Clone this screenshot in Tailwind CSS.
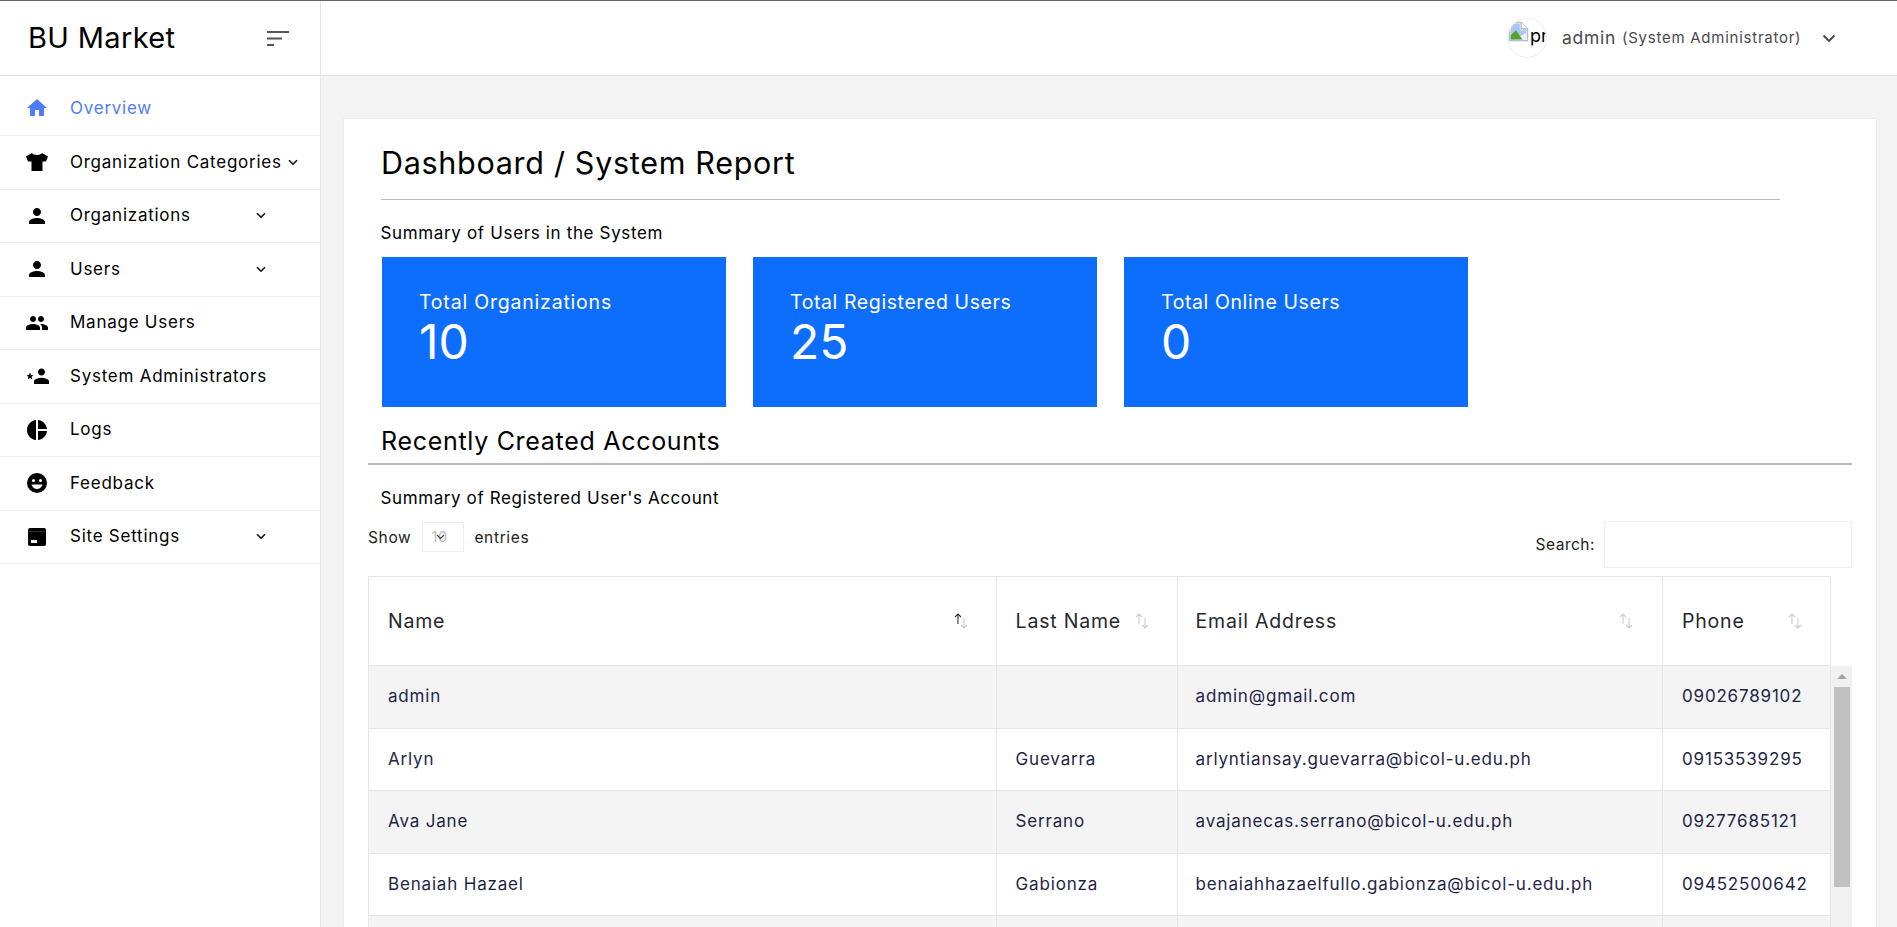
<!DOCTYPE html>
<html>
<head>
<meta charset="utf-8">
<script src="https://cdn.jsdelivr.net/npm/@tailwindcss/browser@4"></script>
</head>
<body class="m-0">
<div class="flex h-[927px] w-[1897px] overflow-hidden border-t border-[#666] bg-[#f3f3f3] font-['Inter','Liberation_Sans',sans-serif] text-black">
  <aside class="w-[321px] shrink-0 bg-white border-r border-[#e6e6e6]">
    <div class="h-[75px] border-b border-[#e3e3e3] flex items-center justify-between pl-[28px] pr-[31px]">
      <span class="text-[29px] leading-[40px] tracking-[0.35px]">BU Market</span>
      <svg width="22" height="15" viewBox="0 0 22 15" class="mt-px"><path d="M0 1h22M0 7.500h15M0 14h7" stroke="#555" stroke-width="2" fill="none"/></svg>
    </div>
    <nav class="text-[17px] tracking-[0.75px]">
      <a class="flex items-center h-[60px] pt-[7px] pl-[25px] gap-[21px] border-b border-[#efefef] text-[#4f7cff]">
        <svg width="24" height="24" viewBox="0 0 24 24" fill="currentColor" class="-mt-[2px]"><path d="M10 20v-6h4v6h5v-8h3L12 3 2 12h3v8z"/></svg><span>Overview</span>
      </a>
      <a class="flex items-center h-[53.500px] pl-[25px] gap-[21px] border-b border-[#efefef]">
        <svg width="24" height="24" viewBox="0 0 24 24" fill="#000"><path d="M7 3 1 6.500 3 11.500H6.500V21H17.500V11.500H21L23 6.500 17 3C16 5.500 8 5.500 7 3Z"/></svg><span>Organization Categories</span>
        <svg width="10" height="7" viewBox="0 0 10 7" class="absolute left-[288px] mt-px"><path d="M1 1.200 5 5.200 9 1.200" stroke="#111" stroke-width="1.600" fill="none"/></svg>
      </a>
      <a class="flex items-center h-[53.500px] pl-[25px] gap-[21px] border-b border-[#efefef]">
        <svg width="24" height="24" viewBox="0 0 24 24" fill="#000"><path d="M12 12c2.210 0 4-1.790 4-4s-1.790-4-4-4-4 1.790-4 4 1.790 4 4 4zm0 2c-2.670 0-8 1.340-8 4v2h16v-2c0-2.660-5.330-4-8-4z"/></svg><span class="w-[166px]">Organizations</span>
        <svg width="10" height="7" viewBox="0 0 10 7" class="-ml-[1px]"><path d="M1 1.200 5 5.200 9 1.200" stroke="#111" stroke-width="1.600" fill="none"/></svg>
      </a>
      <a class="flex items-center h-[53.500px] pl-[25px] gap-[21px] border-b border-[#efefef]">
        <svg width="24" height="24" viewBox="0 0 24 24" fill="#000"><path d="M12 12c2.210 0 4-1.790 4-4s-1.790-4-4-4-4 1.790-4 4 1.790 4 4 4zm0 2c-2.670 0-8 1.340-8 4v2h16v-2c0-2.660-5.330-4-8-4z"/></svg><span class="w-[166px]">Users</span>
        <svg width="10" height="7" viewBox="0 0 10 7" class="-ml-[1px]"><path d="M1 1.200 5 5.200 9 1.200" stroke="#111" stroke-width="1.600" fill="none"/></svg>
      </a>
      <a class="flex items-center h-[53.500px] pl-[25px] gap-[21px] border-b border-[#efefef]">
        <svg width="24" height="24" viewBox="0 0 24 24" fill="#000"><path d="M16 11c1.660 0 2.990-1.340 2.990-3S17.660 5 16 5c-1.660 0-3 1.340-3 3s1.340 3 3 3zm-8 0c1.660 0 2.990-1.340 2.990-3S9.660 5 8 5C6.340 5 5 6.340 5 8s1.340 3 3 3zm0 2c-2.330 0-7 1.170-7 3.500V19h14v-2.500c0-2.330-4.670-3.500-7-3.500zm8 0c-.29 0-.62.02-.97.05 1.160.84 1.970 1.970 1.970 3.450V19h6v-2.500c0-2.330-4.670-3.500-7-3.500z"/></svg><span>Manage Users</span>
      </a>
      <a class="flex items-center h-[53.500px] pl-[25px] gap-[21px] border-b border-[#efefef]">
        <svg width="24" height="24" viewBox="0 0 24 24" fill="#000"><path d="M16.500 11.500c1.900 0 3.500-1.600 3.500-3.500s-1.600-3.500-3.500-3.500S13 6.100 13 8s1.600 3.500 3.500 3.500zm0 2.200c-2.400 0-7.500 1.200-7.500 3.500V20h15v-2.800c0-2.300-5.100-3.500-7.500-3.500z"/><path d="M5 8.500l1 2.500 2.500.2-1.900 1.600.6 2.500L5 13.900l-2.200 1.400.6-2.500L1.500 11.200 4 11z"/></svg><span>System Administrators</span>
      </a>
      <a class="flex items-center h-[53.500px] pl-[25px] gap-[21px] border-b border-[#efefef]">
        <svg width="24" height="24" viewBox="0 0 24 24" fill="#000"><path d="M11 2v20c-5.070-.5-9-4.790-9-10s3.930-9.500 9-10zm2.030 0v8.990H22c-.47-4.740-4.240-8.520-8.970-8.990zm0 11.010V22c4.740-.47 8.500-4.250 8.970-8.990h-8.970z"/></svg><span>Logs</span>
      </a>
      <a class="flex items-center h-[53.500px] pl-[25px] gap-[21px] border-b border-[#efefef]">
        <svg width="24" height="24" viewBox="0 0 24 24" fill="#000"><circle cx="12" cy="12" r="10"/><circle cx="8.500" cy="9.500" r="1.500" fill="#fff"/><circle cx="15.500" cy="9.500" r="1.500" fill="#fff"/><path d="M6.500 13.500h11c-.6 2.500-2.900 4.500-5.500 4.500s-4.900-2-5.500-4.500z" fill="#fff"/></svg><span>Feedback</span>
      </a>
      <a class="flex items-center h-[53.500px] pl-[25px] gap-[21px] border-b border-[#efefef]">
        <svg width="24" height="24" viewBox="0 0 24 24" fill="#000"><rect x="3" y="3" width="18" height="18" rx="2"/><path d="M3.500 6.500h17" stroke="#445" stroke-width=".6"/><rect x="6" y="15" width="6" height="3" fill="#fff"/></svg><span class="w-[166px]">Site Settings</span>
        <svg width="10" height="7" viewBox="0 0 10 7" class="-ml-[1px]"><path d="M1 1.200 5 5.200 9 1.200" stroke="#111" stroke-width="1.600" fill="none"/></svg>
      </a>
    </nav>
  </aside>
  <div class="flex-1 min-w-0 flex flex-col">
    <header class="h-[75px] shrink-0 bg-white border-b border-[#e3e3e3] flex items-center pl-[1186px]">
      <div class="relative w-[40px] h-[40px] rounded-full overflow-hidden border border-[#eee] flex items-start pt-[2px] text-[18px] leading-[24px] whitespace-nowrap mb-[1px]">
        <svg width="21" height="21" viewBox="0 0 16 16" class="shrink-0"><path d="M1 1h9l5 5v9H1z" fill="#e8eefb" stroke="#a9b0bd" stroke-width=".8"/><path d="M10 1v5h5" fill="#fff" stroke="#a9b0bd" stroke-width=".8"/><path d="M2 2h7v5h5v2l-9 5H2z" fill="#a8c8f2"/><path d="M2 14v-3l4-4 5 7z" fill="#5aa02c"/></svg><span class="pt-[3px] ml-[1px]">pr</span>
      </div>
      <span class="ml-[15px] text-[17.500px] text-[#4a4a4a] tracking-[0.7px]">admin</span>
      <span class="ml-[6px] text-[15px] text-[#4a4a4a] tracking-[0.75px]">(System Administrator)</span>
      <svg width="14" height="9" viewBox="0 0 14 9" class="ml-[21px]"><path d="M1.500 1.500 7 7l5.500-5.500" stroke="#444" stroke-width="1.800" fill="none"/></svg>
    </header>
    <main class="flex-1 min-h-0 pl-[22px] pr-[20px] pt-[42px]">
      <section class="bg-white border border-[#ececec] h-[900px] pl-[24px] pt-[24px]">
        <h1 class="ml-[13px] text-[30.500px] leading-[40px] tracking-[0.7px] mb-[16px]">Dashboard / System Report</h1>
        <div class="ml-[13px] w-[1399px] h-px bg-[#bbb]"></div>
        <p class="ml-[12.500px] mt-[21px] text-[17px] leading-[24px] tracking-[0.65px]">Summary of Users in the System</p>
        <div class="ml-[14px] mt-[12px] flex gap-[27px]">
          <div class="w-[344px] h-[150px] bg-[#0d6efd] text-white pl-[37px] pt-[32px]">
            <div class="text-[19.500px] leading-[26px] tracking-[0.8px]">Total Organizations</div>
            <div class="text-[48px] leading-[52px] mt-[1px]">10</div>
          </div>
          <div class="w-[344px] h-[150px] bg-[#0d6efd] text-white pl-[37px] pt-[32px]">
            <div class="text-[19.500px] leading-[26px] tracking-[0.6px]">Total Registered Users</div>
            <div class="text-[48px] leading-[52px] mt-[1px]">25</div>
          </div>
          <div class="w-[344px] h-[150px] bg-[#0d6efd] text-white pl-[37px] pt-[32px]">
            <div class="text-[19.500px] leading-[26px] tracking-[0.6px]">Total Online Users</div>
            <div class="text-[48px] leading-[52px] mt-[1px]">0</div>
          </div>
        </div>
        <h2 class="ml-[13px] mt-[18px] text-[25px] leading-[32px] tracking-[0.7px]">Recently Created Accounts</h2>
        <div class="mt-[6px] w-[1484px] h-[2px] bg-[#bbb]"></div>
        <p class="ml-[12.500px] mt-[21px] text-[17px] leading-[24px] tracking-[0.6px]">Summary of Registered User's Account</p>
        <div class="mt-[11px] w-[1484px] h-[47px] flex justify-between items-start">
          <div class="flex items-center h-[30px] mt-[1px] text-[15.500px] tracking-[0.65px] text-[#222]">
            <span class="mt-[2px]">Show</span>
            <div class="relative ml-[11px] mr-[10px] w-[42px] h-[30px] border border-[#eee] flex items-center pl-[8px] text-[14.500px] text-[#bbb]">
              <span>10</span>
              <svg width="9" height="6" viewBox="0 0 9 6" class="absolute left-[13px] top-[11px]"><path d="M1 1l3.500 3.500L8 1" stroke="#444" stroke-width="1.200" fill="none"/></svg>
            </div>
            <span class="mt-[2px]">entries</span>
          </div>
          <div class="flex items-center h-[47px]">
            <span class="text-[15.500px] tracking-[0.5px] text-[#222] mr-[9px] mt-[1px]">Search:</span>
            <div class="w-[248px] h-[47px] border border-[#eee] rounded-[3px] bg-white"></div>
          </div>
        </div>
        <div class="mt-[8px] flex w-[1484px]">
          <table class="w-[1462px] table-fixed border-collapse text-[#1f2547] text-[17px] tracking-[0.82px]">
            <colgroup><col class="w-[627.600px]"><col class="w-[181px]"><col class="w-[485.400px]"><col class="w-[168px]"></colgroup>
            <thead>
              <tr class="h-[89px] text-[19.500px] tracking-[0.8px] text-[#26282e] font-normal">
                <th class="border border-[#e6e6e6] pl-[19px] pr-[20px] font-normal text-left"><div class="flex justify-between items-center pr-[7px]"><span class="mt-[2px]">Name</span><svg width="16" height="16" viewBox="0 0 16 16" fill="none" stroke-width="1.100"><path d="M5 11V1M2 4l3-3 3 3" stroke="#333"/><path d="M11 5v10M8 12l3 3 3-3" stroke="#ccc"/></svg></div></th>
                <th class="border border-[#e6e6e6] pl-[19px] pr-[20px] font-normal text-left"><div class="flex justify-between items-center pr-[7px]"><span class="mt-[2px]">Last Name</span><svg width="16" height="16" viewBox="0 0 16 16" fill="none" stroke="#ccc" stroke-width="1.100"><path d="M5 11V1M2 4l3-3 3 3M11 5v10M8 12l3 3 3-3"/></svg></div></th>
                <th class="border border-[#e6e6e6] pl-[18px] pr-[20px] font-normal text-left"><div class="flex justify-between items-center pr-[8px]"><span class="mt-[2px]">Email Address</span><svg width="16" height="16" viewBox="0 0 16 16" fill="none" stroke="#ccc" stroke-width="1.100"><path d="M5 11V1M2 4l3-3 3 3M11 5v10M8 12l3 3 3-3"/></svg></div></th>
                <th class="border border-[#e6e6e6] pl-[19px] pr-[20px] font-normal text-left"><div class="flex justify-between items-center pr-[7px]"><span class="mt-[2px]">Phone</span><svg width="16" height="16" viewBox="0 0 16 16" fill="none" stroke="#ccc" stroke-width="1.100"><path d="M5 11V1M2 4l3-3 3 3M11 5v10M8 12l3 3 3-3"/></svg></div></th>
              </tr>
            </thead>
            <tbody>
              <tr class="h-[62.500px] bg-[#f4f4f4]"><td class="border border-[#e6e6e6] pl-[19px] pr-[20px]">admin</td><td class="border border-[#e6e6e6] pl-[19px] pr-[20px]"></td><td class="border border-[#e6e6e6] pl-[18px] pr-[10px]">admin@gmail.com</td><td class="border border-[#e6e6e6] pl-[19px] pr-[10px]">09026789102</td></tr>
              <tr class="h-[62.500px] bg-white"><td class="border border-[#e6e6e6] pl-[19px] pr-[20px]">Arlyn</td><td class="border border-[#e6e6e6] pl-[19px] pr-[20px]">Guevarra</td><td class="border border-[#e6e6e6] pl-[18px] pr-[10px]">arlyntiansay.guevarra@bicol-u.edu.ph</td><td class="border border-[#e6e6e6] pl-[19px] pr-[10px]">09153539295</td></tr>
              <tr class="h-[62.500px] bg-[#f4f4f4]"><td class="border border-[#e6e6e6] pl-[19px] pr-[20px]">Ava Jane</td><td class="border border-[#e6e6e6] pl-[19px] pr-[20px]">Serrano</td><td class="border border-[#e6e6e6] pl-[18px] pr-[10px]">avajanecas.serrano@bicol-u.edu.ph</td><td class="border border-[#e6e6e6] pl-[19px] pr-[10px]">09277685121</td></tr>
              <tr class="h-[62.500px] bg-white"><td class="border border-[#e6e6e6] pl-[19px] pr-[20px]">Benaiah Hazael</td><td class="border border-[#e6e6e6] pl-[19px] pr-[20px]">Gabionza</td><td class="border border-[#e6e6e6] pl-[18px] pr-[10px]">benaiahhazaelfullo.gabionza@bicol-u.edu.ph</td><td class="border border-[#e6e6e6] pl-[19px] pr-[10px]">09452500642</td></tr>
              <tr class="h-[62.500px] bg-[#f4f4f4]"><td class="border border-[#e6e6e6] pl-[19px] pr-[20px]"></td><td class="border border-[#e6e6e6] pl-[19px] pr-[20px]"></td><td class="border border-[#e6e6e6] pl-[18px] pr-[20px]"></td><td class="border border-[#e6e6e6] pl-[19px] pr-[20px]"></td></tr>
            </tbody>
          </table>
          <div class="w-[22px] pt-[90px]">
            <div class="h-[300px] bg-[#f1f1f1] pl-[3px] pr-[2px] pt-[8px]">
              <svg width="10" height="5" viewBox="0 0 10 5" class="mx-auto"><path d="M0 5 5 0l5 5z" fill="#a3a3a3"/></svg>
              <div class="mt-[8px] h-[200px] bg-[#c1c1c1]"></div>
            </div>
          </div>
        </div>
      </section>
    </main>
  </div>
</div>
</body>
</html>
